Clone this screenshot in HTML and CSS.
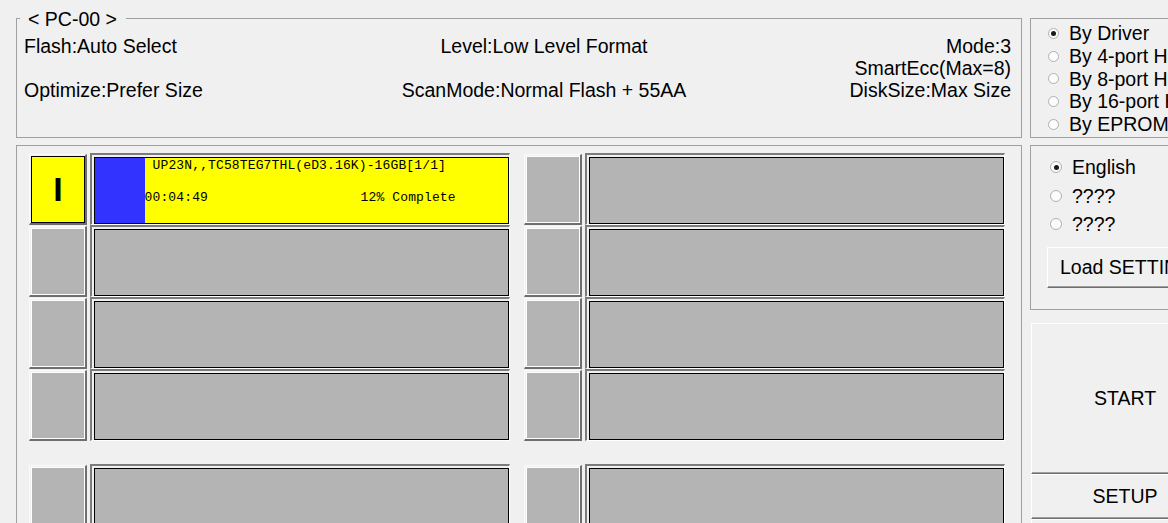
FILE: index.html
```html
<!DOCTYPE html>
<html lang="en">
<head>
    <meta charset="UTF-8">
    <meta name="viewport" content="width=device-width, initial-scale=1.0">
    <title>PC-00</title>
    <link rel="stylesheet" href="styles.css">
</head>
<body>
    <div class="app">
        <div class="group info">
            <span class="legend">&lt; PC-00 &gt;</span>
            <div class="info-grid">
                <p>Flash:Auto Select</p>
                <p class="mid">Level:Low Level Format</p>
                <p class="right">Mode:3</p>
                <p></p>
                <p></p>
                <p class="right">SmartEcc(Max=8)</p>
                <p>Optimize:Prefer Size</p>
                <p class="mid">ScanMode:Normal Flash + 55AA</p>
                <p class="right">DiskSize:Max Size</p>
            </div>
        </div>

        <div class="group mode">
            <div class="opt"><span class="radio on"></span>By Driver</div>
            <div class="opt"><span class="radio"></span>By 4-port HUB</div>
            <div class="opt"><span class="radio"></span>By 8-port HUB</div>
            <div class="opt"><span class="radio"></span>By 16-port HUB</div>
            <div class="opt"><span class="radio"></span>By EPROM</div>
        </div>

        <div class="panel" id="slotPanel">
            <!-- port slots are generated here -->
        </div>

        <div class="side">
            <div class="group lang">
                <div class="opt"><span class="radio on"></span>English</div>
                <div class="opt"><span class="radio"></span>????</div>
                <div class="opt"><span class="radio"></span>????</div>
                <button class="btn load">Load SETTINGS</button>
            </div>
            <button class="btn start">START</button>
            <button class="btn setup">SETUP</button>
            <button class="btn setup">EXIT</button>
        </div>
    </div>

    <script>
        const slotPanel = document.getElementById('slotPanel');

        // the one port that is running
        const activePort = {
            label: 'I',
            title: 'UP23N,,TC58TEG7THL(eD3.16K)-16GB[1/1]',
            time: '00:04:49',
            percent: 12
        };

        function makeSlot(port) {
            const slot = document.createElement('div');
            slot.className = 'slot';
            if (port) {
                slot.innerHTML =
                    '<div class="port"><div class="face active">' + port.label + '</div></div>' +
                    '<div class="bar"><div class="face active">' +
                        '<div class="progress" style="width: ' + port.percent + '%"></div>' +
                        '<div class="details">' +
                            '<div class="title">' + port.title + '</div>' +
                            '<div class="status"><span class="time">' + port.time + '</span>' +
                            '<span>' + port.percent + '% Complete</span></div>' +
                        '</div>' +
                    '</div></div>';
            } else {
                slot.innerHTML =
                    '<div class="port"><div class="face"></div></div>' +
                    '<div class="bar"><div class="face"></div></div>';
            }
            return slot;
        }

        // 2 banks, 4 rows each, 2 ports per row
        for (let b = 0; b < 2; b++) {
            const bank = document.createElement('div');
            bank.className = 'bank';
            for (let i = 0; i < 8; i++) {
                bank.appendChild(makeSlot(b === 0 && i === 0 ? activePort : null));
            }
            slotPanel.appendChild(bank);
        }
    </script>
</body>
</html>
```

FILE: styles.css
```css
body {
    margin: 0;
    width: 1168px;
    height: 523px;
    overflow: hidden;
    background-color: #f0f0f0;
    font-family: "Liberation Sans", Arial, sans-serif;
    font-size: 19.5px;
    color: #000;
}

.app {
    display: grid;
    grid-template-columns: 1006px 190px;
    grid-template-rows: 120px auto;
    column-gap: 8px;
    row-gap: 7px;
    padding: 18px 0 0 16px;
}

.group {
    position: relative;
    border: 1px solid #a0a0a0;
    box-sizing: border-box;
}

/* top info box */
.info {
    padding: 16px 10px 0 7px;
}

.legend {
    position: absolute;
    top: -11px;
    left: 3px;
    padding: 0 9px 0 8px;
    background-color: #f0f0f0;
    line-height: 22px;
}

.info-grid {
    display: grid;
    grid-template-columns: 336px 368px 1fr;
    line-height: 22px;
}

.info-grid p {
    margin: 0;
    height: 22px;
    white-space: nowrap;
}

.mid {
    text-align: center;
}

.right {
    text-align: right;
}

/* radio groups */
.mode {
    padding: 3px 0 0 17px;
    line-height: 22.8px;
    overflow: hidden;
}

.opt {
    display: flex;
    align-items: center;
    white-space: nowrap;
}

.radio {
    position: relative;
    flex: none;
    width: 11px;
    height: 11px;
    box-sizing: border-box;
    margin-right: 10px;
    border: 1px solid #b0b0b0;
    border-radius: 50%;
    background-color: #fcfcfc;
}

.radio.on::after {
    content: "";
    position: absolute;
    left: 2px;
    top: 2px;
    width: 5px;
    height: 5px;
    border-radius: 50%;
    background-color: #1a1a1a;
}

.lang {
    height: 165px;
    padding: 7px 0 0 19px;
    line-height: 28.5px;
    overflow: hidden;
}

.lang .radio {
    width: 12px;
    height: 12px;
}

.lang .radio.on::after {
    left: 2.5px;
    top: 2.5px;
}

/* buttons */
.btn {
    font: inherit;
    color: #000;
    background-color: #f0f0f0;
    box-sizing: border-box;
    border: 1px solid;
    border-color: #fff #6e6e6e #6e6e6e #fff;
    box-shadow: inset -1px -1px #a0a0a0;
    white-space: nowrap;
}

.load {
    display: block;
    width: 170px;
    height: 41px;
    margin: 8px 0 0 -3px;
    padding: 0 0 0 12px;
    text-align: left;
}

.side {
    display: flex;
    flex-direction: column;
}

.start {
    width: 188px;
    height: 151px;
    margin: 13px 0 0 1px;
}

.setup {
    width: 188px;
    height: 45px;
    margin-left: 1px;
}

/* port slots */
.panel {
    height: 420px;
    box-sizing: border-box;
    border: 1px solid #a0a0a0;
    padding: 7px 0 0 12px;
}

.bank {
    display: grid;
    grid-template-columns: 481px 481px;
    column-gap: 14px;
}

.bank + .bank {
    margin-top: 23px;
}

.slot {
    display: flex;
    gap: 3px;
    height: 72px;
}

.port {
    width: 58px;
    height: 71px;
    margin-top: 1px;
    box-sizing: border-box;
    border-style: solid;
    border-width: 1px 2px 2px 1px;
    border-color: #fafafa #6e6e6e #6e6e6e #fafafa;
    padding: 1px 0 0 1px;
}

.face {
    height: 100%;
    box-sizing: border-box;
    border: 1px solid #fff;
    background-color: #b4b4b4;
}

.port .face.active {
    display: flex;
    align-items: center;
    justify-content: center;
    border-color: #000;
    background-color: #ffff00;
    font-size: 34px;
    font-weight: bold;
}

.bar {
    flex: 1;
    box-sizing: border-box;
    border-style: solid;
    border-width: 2px 1px 1px 2px;
    border-color: #7c7c7c #fff #fff #7c7c7c;
    padding: 2px 0 0 2px;
}

.bar .face {
    border-color: #000;
}

.bar .face.active {
    display: flex;
    background-color: #ffff00;
}

.progress {
    flex: none;
    background-color: #3333ff;
}

.details {
    font-family: "Liberation Mono", "Courier New", monospace;
    font-size: 13px;
    letter-spacing: 0.13px;
    line-height: 16px;
    white-space: nowrap;
}

.title {
    padding-left: 8px;
}

.status {
    display: flex;
    margin-top: 16px;
}

.time {
    width: 216px;
}
```
